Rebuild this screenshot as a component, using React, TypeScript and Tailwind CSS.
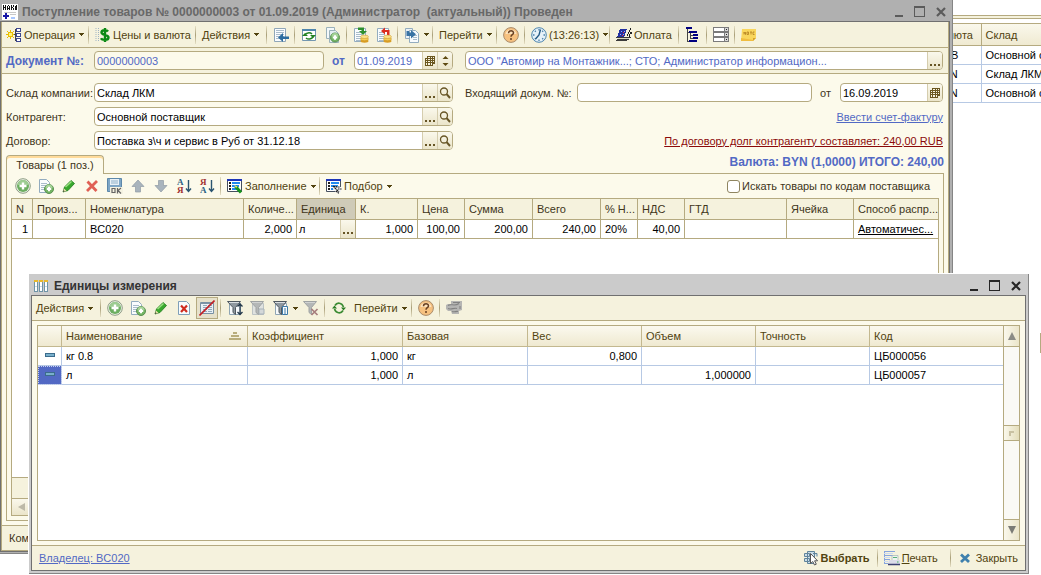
import React from "react";

type Kids = { children?: React.ReactNode };

/* ---------- icons ---------- */

function Svg({ children, crisp = false, w = 16, h = 16 }: Kids & { crisp?: boolean; w?: number; h?: number }) {
  return (
    <svg width={w} height={h} viewBox={`0 0 ${w} ${h}`} className="shrink-0" shapeRendering={crisp ? "crispEdges" : "auto"} aria-hidden="true" fill="none">
      {children}
    </svg>
  );
}

const InvoiceIcon = () => (
  <Svg crisp w={16} h={16}>
    <path d="M0 0h16v16H0z" fill="#fff" />
    <path d="M1 1h1v5H1zM3 1h1v5H3zM2 3h1v1H2zM5 2h1v4H5zM6 1h1v1H6zM7 2h1v4H7zM6 4h1v1H6zM9 1h1v5H9zM10 3h1v1h-1zM11 1h1v2h-1zM11 4h1v2h-1zM13 2h1v4h-1zM14 1h1v5h-1z" fill="#111" />
    <path d="M2 8h12v1H2zM8 10h6v1H8z" fill="#c9c9c9" />
    <path d="M1 11h6v2H1zM3 9h2v6H3z" fill="#1515a8" />
    <path d="M9 13h4v2H9z" fill="#a9c8ff" />
  </Svg>
);

const OperationIcon = () => (
  <Svg crisp>
    <path d="M1 4h1v1H1zM4 3h1v2H4zM7 4h1v1H7zM2 5h5v1H2zM0 7h8v1H0zM2 6h1v3H2zM5 6h2v3H5zM2 9h5v1H2zM4 10h1v2H4zM1 10h1v1H1zM7 10h1v1H7z" fill="#e9bd00" />
    <path d="M3 6h3v3H3z" fill="#fff27a" />
    <path d="M8 7h2v1H8zM9 2h1v12H9zM9 2h2v1H9zM9 13h2v1H9z" fill="#444" />
    <path d="M10 1h5v4h-5zM10 6h5v4h-5zM10 11h5v4h-5z" fill="#3c4790" />
    <path d="M11 2h3v2h-3zM11 7h3v2h-3zM11 12h3v2h-3z" fill="#fff" />
  </Svg>
);

const DollarIcon = () => (
  <Svg>
    <path d="M1 1v14M3.500 1v14" stroke="#9fb4c4" strokeDasharray="1 1" />
    <path d="M13 4.500C12 3 6.500 2.500 6.500 5.500c0 3 7 1.800 7 5 0 3.300-6.500 2.800-7.500.8M10 1v14" stroke="#0b8a14" strokeWidth="2.400" />
  </Svg>
);

const Lines = ({ x = 3, y = 4, n = 4, w = 8 }: { x?: number; y?: number; n?: number; w?: number }) => (
  <>
    {Array.from({ length: n }, (_, i) => (
      <path key={i} d={`M${x} ${y + i * 2 + 0.5}h${w}`} stroke="#a9bccb" />
    ))}
  </>
);

const RegisterIcon = () => (
  <Svg>
    <path d="M1.500 1.500h11v13h-11z" fill="#fafcfe" stroke="#8fa6b8" />
    <Lines x={3} y={3} n={5} w={8} />
    <path d="M16 9.500H10V6L5 10.500l5 4.500v-3h6z" fill="#2d6da0" />
  </Svg>
);

const RefreshPageIcon = () => (
  <Svg>
    <path d="M1.500 2.500h13v11h-13z" fill="#fff" stroke="#7397b0" />
    <path d="M1 2h14v2H1z" fill="#4f86ad" />
    <path d="M4 8a4 3 0 0 1 7-1M12 9a4 3 0 0 1-7 2" stroke="#238323" strokeWidth="1.500" />
    <path d="M9 8h6l-3 3zM7 9H1l3-3z" fill="#238323" />
  </Svg>
);

const PlusBall = ({ cx, cy, r }: { cx: number; cy: number; r: number }) => (
  <>
    <circle cx={cx} cy={cy} r={r} fill="#74b565" stroke="#5b9151" />
    <path d={`M${cx - r + 1} ${cy - 1}a${r - 1} ${r - 1} 0 0 1 ${2 * r - 2} 0z`} fill="#a5d398" />
    <path d={`M${cx - r / 2} ${cy}h${r}M${cx} ${cy - r / 2}v${r}`} stroke="#fff" strokeWidth="2" />
  </>
);

const CopyAddIcon = () => (
  <Svg>
    <path d="M1.500.5h8v11h-8z" fill="#f3f8fa" stroke="#9ab1ba" />
    <path d="M4.500 3.500h6l3 3v9h-9z" fill="#e4eef2" stroke="#9ab1ba" />
    <PlusBall cx={10} cy={10.500} r={4.500} />
  </Svg>
);

const DocAddIcon = () => (
  <Svg>
    <path d="M1.500 1.500h7l3 3v10h-10z" fill="#fafcfd" stroke="#93acbf" />
    <Lines x={3} y={5} n={4} w={6} />
    <PlusBall cx={11} cy={11} r={4.500} />
  </Svg>
);

const AddIcon = () => (
  <Svg>
    <circle cx="8" cy="8" r="7.300" fill="#f2f5ec" stroke="#8b9b83" />
    <circle cx="8" cy="8" r="6" fill="#6cae61" />
    <path d="M2.500 7a5.500 5 0 0 1 11 0z" fill="#9dcc92" />
    <path d="M4.500 8h7M8 4.500v7" stroke="#fff" strokeWidth="2.400" />
  </Svg>
);

const PostIcon = ({ red = false }: { red?: boolean }) => (
  <Svg>
    <path d="M1.500 1.500h11v13h-11z" fill="#fafcfe" stroke="#94adc0" />
    <Lines x={3} y={5} n={5} w={6} />
    {red ? (
      <path d="M13.500 8V3H9V.5L5 4l4 3.500V5h2v3" fill="#dc2e20" />
    ) : (
      <path d="M5 .5h6V4h3l-4 4-4-4h2.500V3H5z" fill="#2e8f2d" />
    )}
    <ellipse cx="11.500" cy="14" rx="4" ry="1.700" fill="#d99d24" />
    <ellipse cx="11.500" cy="12" rx="4" ry="1.700" fill="#f4cf58" stroke="#c98e20" strokeWidth=".5" />
    <ellipse cx="11.500" cy="9.800" rx="4" ry="1.700" fill="#fae28a" stroke="#c98e20" strokeWidth=".5" />
  </Svg>
);

const BasedOnIcon = () => (
  <Svg>
    <path d="M1.500 1.500h7v10h-7z" fill="#eaf1f6" stroke="#93acbf" />
    <path d="M5.500 3.500h6l3 3v9h-9z" fill="#f8fbfd" stroke="#93acbf" />
    <Lines x={9} y={8} n={3} w={4} />
    <path d="M2.500 4v5H7v2.500l5-4.300L7 3v2.500H5V4z" fill="#3873a4" />
  </Svg>
);

const HelpIcon = () => (
  <Svg>
    <circle cx="8" cy="8" r="7.400" fill="#f6c180" stroke="#a98c6c" />
    <path d="M2.500 7a5.700 5.700 0 0 1 11 0z" fill="#fde3bd" />
    <path d="M5.500 6.200C5.500 3 10.700 3.200 10.500 6 10.400 7.700 8 7.800 8 9.800M8 11v2" stroke="#684023" strokeWidth="1.500" />
  </Svg>
);

const ClockIcon = () => (
  <Svg>
    <circle cx="8" cy="8" r="7.300" fill="#e6f1f8" stroke="#4c84ae" />
    <path d="M8 2v1.500M8 12.500V14M2 8h1.500M12.500 8H14M3.800 3.800l1 1M11.200 11.200l1 1M3.800 12.200l1-1M11.200 4.800l1-1" stroke="#4a82ab" strokeWidth="1.300" />
    <path d="M9.500 2.500L8 8l-3.500 4" stroke="#245a84" strokeWidth="1.400" />
  </Svg>
);

const PaymentIcon = () => (
  <Svg crisp>
    <path d="M4 2h7l-3 8H1z" fill="#2230a0" />
    <path d="M5 4h1v1H5zM8 4h1v1H8zM4 7h1v1H4zM7 7h1v1H7z" fill="#9aabff" />
    <path d="M7 5h1v1H7zM6 8h1v1H6z" fill="#e33" />
    <path d="M0 10h15v1H0zM1 12h12v1H1zM0 13h11v1H0z" fill="#3b3b3b" />
    <path d="M2 11h11v1H2z" fill="#d7d7c4" />
    <path d="M14 1h1v2h-1zM13 3h1v2h-1zM12 5h1v2h-1zM11 7h1v2h-1zM14 5h2v2h-2zM13 7h1v3h-1z" fill="#202020" />
  </Svg>
);

const TreeIcon = () => (
  <Svg crisp>
    <path d="M1 0h6v2H1zM4 4h8v2H4zM8 7h5v2H8zM8 10h5v2H8zM4 13h8v2H4z" fill="#000080" />
    <path d="M2 2h1v13H2zM2 5h2v1H2zM5 6h1v6H5zM5 8h3v1H5zM5 11h3v1H5zM2 14h2v1H2z" fill="#444" />
  </Svg>
);

const FormIcon = () => (
  <Svg crisp>
    {[0, 5, 10].map((y) => (
      <g key={y}>
        <path d={`M0 ${y}h16v5H0z`} fill="#7b7b7b" />
        <path d={`M1 ${y + 1}h10v3H1z`} fill="#fff" />
        <path d={`M12 ${y + 1}h3v3h-3z`} fill="#d8d8d8" />
        <path d={`M13 ${y + 2}h1v1h-1z`} fill="#222" />
      </g>
    ))}
  </Svg>
);

const NoteIcon = () => (
  <Svg>
    <path d="M1 2h14v9l-3 3H0z" fill="#f9d65c" />
    <path d="M15 11h-3v3z" fill="#d6a22a" />
    <path d="M0 11l12 2v1H0z" fill="#f0bd40" />
    <path d="M3 7.500V5l1.500 2.500V5M6 5h1.500v2.500H6zM9 5h2M10 5v2.500M13.500 5H12v2.500h1.500" stroke="#b17f20" strokeWidth=".8" />
  </Svg>
);

const PencilIcon = () => (
  <Svg>
    <path d="M2 14l1.500-5L10 2.500l3.500 3L7 12.500z" fill="#39a82e" stroke="#1d7a1a" strokeWidth=".8" />
    <path d="M4.500 9L10.500 3.500" stroke="#9be082" strokeWidth="1.500" />
    <path d="M2 14l1-3.500 2.500 2.500z" fill="#f2e3b0" />
    <path d="M2 14l.5-1.700 1.200 1z" fill="#222" />
  </Svg>
);

const RedXIcon = () => (
  <Svg>
    <path d="M3.500 3.500l9 9.500M13 3l-10 10" stroke="#e06055" strokeWidth="2.800" />
  </Svg>
);

const SaveOkIcon = () => (
  <Svg>
    <path d="M.5.500h14v13H.5z" fill="#7ea6c6" stroke="#5d88aa" />
    <path d="M3 1h9v6H3z" fill="#e9f1f7" />
    <path d="M4 3h7M4 5h7" stroke="#8fb0c8" />
    <path d="M3 9h13v7H3z" fill="#f5f3e2" />
    <path d="M5 10.500h3v4H5zM10.500 10v5.500M14 10l-3 2.500 3 3" stroke="#666" strokeWidth="1.200" />
  </Svg>
);

const ArrowIcon = ({ down = false }: { down?: boolean }) => (
  <Svg>
    <path d={down ? "M5.500 2.500h5v5H14l-6 6.500-6-6.500h3.500z" : "M5.500 14v-5.500H2L8 2l6 6.500h-3.500V14z"} fill="#a9b4bd" stroke="#8f9ba5" strokeWidth=".7" />
  </Svg>
);

const SortIcon = ({ desc = false }: { desc?: boolean }) => (
  <svg width="16" height="16" viewBox="0 0 16 16" className="shrink-0" aria-hidden="true">
    <text x="1" y="7" fontSize="9" fontWeight="700" fontFamily="Liberation Serif, serif" fill={desc ? "#a03030" : "#2b6284"}>{desc ? "Я" : "А"}</text>
    <text x="1" y="15" fontSize="9" fontWeight="700" fontFamily="Liberation Serif, serif" fill={desc ? "#2b6284" : "#a03030"}>{desc ? "А" : "Я"}</text>
    <path d="M12.500 2v11M10 10.500l2.500 3 2.500-3" stroke="#2b5570" strokeWidth="1.400" fill="none" />
  </svg>
);

const FillIcon = ({ pick = false }: { pick?: boolean }) => (
  <Svg>
    <path d="M.5 1.500h14v12H.5z" fill="#fff" stroke="#46505f" />
    <path d="M0 1h15v2H0z" fill="#1d35b8" />
    <path d="M2 4h2v2H2zM2 7h2v2H2zM2 10h2v2H2z" fill="#222" />
    <path d="M5 4h8v2H5zM5 7h7v2H5zM5 10h5v2H5z" fill="#208af0" />
    {pick ? (
      <>
        <path d="M7 8l8 1v5l-3 1.500-5-4z" fill="#f3f3f3" />
        <path d="M7 8l2 2M8 8.500h3M9 10l2 2M10 9h4M11 12l2 2M12 11h4M10 13l3 2.500" stroke="#222" strokeWidth="1.100" strokeDasharray="1.500 .6" />
      </>
    ) : (
      <>
        <path d="M8.500 8.500l5.500 6" stroke="#16931e" strokeWidth="3.200" />
        <path d="M7 7l2 3 1.500-1.500z" fill="#f0e66a" />
      </>
    )}
  </Svg>
);

const UnitsIcon = () => (
  <Svg crisp w={14} h={14}>
    {[0, 5, 10].map((x) => (
      <g key={x}>
        <path d={`M${x} 1h4v12h-4z`} fill="#6f94a6" />
        <path d={`M${x + 1} 3h2v9h-2z`} fill="#fff" />
        <path d={`M${x} 1h4v2h-4z`} fill="#e9b92c" />
        <path d={`M${x + 1} 7h2v1h-2z`} fill="#c8d8df" />
      </g>
    ))}
  </Svg>
);

const DocDeleteIcon = () => (
  <Svg>
    <path d="M2.500 1.500h8l3 3v10h-11z" fill="#f8fbfd" stroke="#7f9fb8" />
    <path d="M5 5.500l6 6.500M11 5.500L5 12" stroke="#cf2b1f" strokeWidth="2.200" />
  </Svg>
);

const HideIcon = () => (
  <Svg>
    <path d="M1.500 2.500h13v11h-13z" fill="#e9f0f5" stroke="#7890a3" />
    <path d="M4 5.500h4M9 5.500h4M4 7.500h4M9 7.500h4M4 9.500h4M9 9.500h4M4 11.500h4M9 11.500h4" stroke="#91a9ba" />
    <path d="M1 3h14v1H1z" fill="#7c93a5" />
    <path d="M.5 15.500L15.500.5" stroke="#c32026" strokeWidth="1.600" />
  </Svg>
);

const FilterIcon = ({ kind }: { kind: "set" | "value" | "menu" | "off" }) => {
  const dim = kind === "value" || kind === "off";
  return (
    <Svg>
      {kind !== "off" && <path d="M2.500 3.500h11v11h-11z" fill={dim ? "#dfe2e0" : "#f7fafc"} stroke={dim ? "#bcc3c4" : "#8fa5b4"} />}
      <path d="M.5 1.500h13l-5 6v7l-2.500-2v-5z" fill={dim ? "#b4b7b7" : "#8f989f"} stroke={dim ? "#9fa3a3" : "#4f585f"} />
      <path d="M2 2.500h10" stroke={dim ? "#d0d2d2" : "#d9dee1"} />
      {kind === "set" && <path d="M13 4v10M10.500 6.500L13 4l2.500 2.500M10.500 12l2.500 2.500 2.500-2.500" stroke="#24384a" strokeWidth="1.300" />}
      {kind === "value" && <path d="M9 9h5v5H9z" fill="#d4d8d9" stroke="#a8b2b8" />}
      {kind === "menu" && <path d="M9.500 6.500h5v8h-5zM11 9h2M11 11h2M11 13h2" fill="#f7fbfe" stroke="#3d7aa7" />}
      {kind === "off" && <path d="M8.500 9l6 6M14.500 9l-6 6" stroke="#a67d7d" strokeWidth="1.700" />}
    </Svg>
  );
};

const RefreshIcon = () => (
  <Svg>
    <path d="M4 5.500C6 2 11 2.500 12.500 7M12 10.500C10 14 5 13.500 3.500 9" stroke="#3b8b33" strokeWidth="1.700" />
    <path d="M10 7.500h5l-2.500 3zM6 8.500H1l2.500-3z" fill="#2b7d24" />
  </Svg>
);

const StackIcon = () => (
  <Svg>
    <path d="M5 1h11v9l-3 1v3H6l-1-3H2L0 9V5l2-1h3z" fill="#b5b5b3" />
    <path d="M2 5.500C5 3 8 7 13 3.500M2 8.500c3 1.500 6-1 9 0M6 11.500c2 1 4-.5 6 0M7 2.500h7M14 6v3" stroke="#828282" strokeWidth="1.100" />
  </Svg>
);

const SelectIcon = () => (
  <Svg>
    <path d="M4.500 1.500h7v12h-7zM1.500 3.500h5v3h-5zM1.500 8.500h5v3h-5zM10 3.500h4v3" fill="#cbdde8" stroke="#60849b" />
    <path d="M7.500 3.500v10l2.300-2 1.700 3.500 1.800-.8-1.700-3.400h3z" fill="#fff" stroke="#555" />
  </Svg>
);

const PrintIcon = () => (
  <Svg>
    <path d="M0 1.500h11M0 5.500h9M0 9.500h6M0 13.500h5M.5 1v13" stroke="#86a4dd" />
    <path d="M0 3.500h9M0 7.500h6M0 11.500h4" stroke="#cbd9f2" />
    <path d="M8 5.500h6v5H8z" fill="#eef5ee" stroke="#a3b4b8" strokeWidth=".7" />
    <path d="M9 7.500h4" stroke="#59b07a" />
    <path d="M5 10h11v4H4z" fill="#dcdcea" />
    <path d="M4 14.500h12" stroke="#3b3f72" strokeWidth="1.500" />
    <path d="M13 12h1.500" stroke="#3ab55a" />
  </Svg>
);

const BlueXIcon = () => (
  <Svg w={12} h={12}>
    <path d="M2 2.500l8 7.500M10 2.500L2 10" stroke="#3f80ad" strokeWidth="2.800" />
  </Svg>
);

const CalendarIcon = () => (
  <Svg crisp w={10} h={10}>
    <path d="M2 0h8v8H2zM0 2h8v8H0z" fill="#6b5720" />
    <path d="M1 3h1v1H1zM3 3h2v1H3zM6 3h1v1H6zM1 5h1v1H1zM3 5h2v1H3zM6 5h1v1H6zM1 7h1v2H1zM3 7h2v2H3zM6 7h1v2H6zM3 1h2v1H3zM6 1h1v1H6zM8 1h1v1H8zM8 3h1v1H8zM8 5h1v1H8z" fill="#f8f4e2" />
  </Svg>
);

const SearchIcon = () => (
  <Svg w={12} h={12}>
    <circle cx="5" cy="4.500" r="3.500" stroke="#675525" strokeWidth="1.300" />
    <path d="M7.500 7l3.500 4" stroke="#675525" strokeWidth="1.900" />
  </Svg>
);

const SpinIcon = () => (
  <Svg w={7} h={12}>
    <path d="M3.500 1L6.500 4h-6zM3.500 11L.5 8h6z" fill="#5e4a12" />
  </Svg>
);

const Dots = () => (
  <Svg crisp w={10} h={10}>
    <path d="M0 8h2v2H0zM4 8h2v2H4zM8 8h2v2H8z" fill="#675525" />
  </Svg>
);

const Caret = () => (
  <Svg crisp w={5} h={3}>
    <path d="M0 0h5v1H0zM1 1h3v1H1zM2 2h1v1H2z" fill="#51430f" />
  </Svg>
);

const RowMark = () => (
  <Svg crisp w={10} h={4}>
    <path d="M0 0h10v4H0z" fill="#3c6c8c" />
    <path d="M1 1h8v2H1z" fill="#79b0cc" />
  </Svg>
);

/* ---------- shared controls ---------- */

function Tool({ icon, label, menu = false, className = "", name }: { icon?: React.ReactNode; label?: string; menu?: boolean; className?: string; name?: string }) {
  return (
    <button type="button" aria-label={label ? undefined : name} className={`flex h-5 shrink-0 items-center gap-[2px] whitespace-nowrap text-[#51430f] ${className}`}>
      {icon}
      {label && <span>{label}</span>}
      {menu && <span className="ml-[2px]"><Caret /></span>}
    </button>
  );
}

const Sep = () => <span className="mr-[6px] ml-[5px] h-[18px] w-px shrink-0 bg-gradient-to-b from-[#e6e0c6] via-[#a99f78] to-[#e6e0c6]" />;

function MiniButton({ children, name }: Kids & { name: string }) {
  return (
    <button type="button" aria-label={name} className="flex w-[15px] shrink-0 items-center justify-center border-l border-[#d5cdae] bg-gradient-to-b from-[#faf8ec] to-[#ebe5ca]">
      {children}
    </button>
  );
}

function Field({ id, value, className = "", input = "text-black", name, children }: Kids & { id: string; value: string; className?: string; input?: string; name?: string }) {
  return (
    <div className={`flex h-[19px] min-w-0 overflow-hidden rounded-[4px] border border-[#b5aa80] ${className}`}>
      <input id={id} aria-label={name} defaultValue={value} className={`min-w-0 flex-1 px-[2px] outline-none ${input}`} />
      {children}
    </div>
  );
}

function WindowButtons({ color }: { color: string }) {
  return (
    <div className={`ml-auto flex items-center gap-[9px] ${color}`}>
      <button type="button" aria-label="Свернуть">
        <Svg crisp w={12} h={12}><path d="M2 9h8v2H2z" fill="currentColor" /></Svg>
      </button>
      <button type="button" aria-label="Развернуть">
        <Svg crisp w={12} h={12}><path d="M0 0h11v11H0zM1 2v8h9V2z" fillRule="evenodd" fill="currentColor" /></Svg>
      </button>
      <button type="button" aria-label="Закрыть окно">
        <Svg w={12} h={12}><path d="M2 2l8 8M10 2l-8 8" stroke="currentColor" strokeWidth="2.200" /></Svg>
      </button>
    </div>
  );
}

/* ---------- background list ---------- */

function BackgroundList() {
  const rows = [["RUB", "Основной склад"], ["BYN", "Склад ЛКМ"], ["BYN", "Основной склад"]];
  return (
    <div className="ml-auto w-[111px] overflow-hidden pt-[15px]">
      <div className="mb-[4px] h-[4px] border-y border-[#b5aa80] bg-[#f5f2dd]" />
      <table className="w-[160px] table-fixed border-collapse border-t border-[#b5aa80]">
        <colgroup><col className="w-[51px]" /><col /></colgroup>
        <thead>
          <tr className="h-[22px] bg-gradient-to-b from-[#faf8ec] to-[#efe9d0] text-left text-[#51430f]">
            <th className="border-r border-b border-[#b5aa80] px-[4px] font-normal">Валюта</th>
            <th className="border-b border-[#b5aa80] px-[4px] font-normal whitespace-nowrap">Склад</th>
          </tr>
        </thead>
        <tbody className="text-black">
          {rows.map((r, i) => (
            <tr key={i} className="h-[19px]">
              <td className="border-r border-b border-[#b7c9e4] px-[5px]">{r[0]}</td>
              <td className="border-b border-[#b7c9e4] px-[4px] whitespace-nowrap">{r[1]}</td>
            </tr>
          ))}
        </tbody>
      </table>
      <div className="mt-[230px] ml-auto h-5 w-px bg-[#b5aa80]" />
    </div>
  );
}

/* ---------- receipt window ---------- */

const goods = [
  { title: "N", w: "w-[21px]", value: "1", right: true },
  { title: "Произ...", w: "w-[53px]", value: "" },
  { title: "Номенклатура", w: "", value: "BC020" },
  { title: "Количе...", w: "w-[53px]", value: "2,000", right: true },
  { title: "Единица", w: "w-[59px]", value: "л", active: true },
  { title: "К.", w: "w-[62px]", value: "1,000", right: true },
  { title: "Цена", w: "w-[47px]", value: "100,00", right: true },
  { title: "Сумма", w: "w-[68px]", value: "200,00", right: true },
  { title: "Всего", w: "w-[68px]", value: "240,00", right: true },
  { title: "% Н...", w: "w-[37px]", value: "20%" },
  { title: "НДС", w: "w-[47px]", value: "40,00", right: true },
  { title: "ГТД", w: "w-[102px]", value: "" },
  { title: "Ячейка", w: "w-[67px]", value: "" },
  { title: "Способ распр...", w: "w-[84px]", value: "Автоматичес...", link: true },
];

function LookupRow({ id, label, value }: { id: string; label: string; value: string }) {
  return (
    <div className="flex items-center">
      <label htmlFor={id} className="w-[88px] shrink-0 whitespace-nowrap">{label}</label>
      <Field id={id} value={value} className="flex-1 bg-white">
        <MiniButton name="Выбрать из списка"><Dots /></MiniButton>
        <MiniButton name="Открыть"><SearchIcon /></MiniButton>
      </Field>
    </div>
  );
}

function ReceiptWindow() {
  return (
    <section className="absolute top-0 right-[88px] bottom-[21px] left-0 flex flex-col border-r border-b border-[#858585] bg-[#b0b0b0] pr-[2px] pb-px">
      <header className="flex h-[21px] shrink-0 items-center pt-[2px] pr-[3px] pl-[2px]">
        <InvoiceIcon />
        <h1 className="ml-[4px] text-[12px] font-bold whitespace-pre text-[#686868]">Поступление товаров № 0000000003 от 01.09.2019 (Администратор  (актуальный)) Проведен</h1>
        <WindowButtons color="text-[#5b5b5b]" />
      </header>
      <div className="flex min-h-0 flex-1 flex-col border border-[#707070] bg-[#fcfaeb]">
        <div className="flex min-h-0 flex-1 flex-col border-x border-b border-[#b5aa80]">
          <div className="flex h-[26px] shrink-0 items-center border-b border-[#b5aa80] bg-[#f5f2dd] pl-[4px]">
            <Tool icon={<OperationIcon />} label="Операция" menu className="w-[77px]" />
            <Sep />
            <Tool icon={<DollarIcon />} label="Цены и валюта" className="w-[95px]" />
            <Sep />
            <Tool label="Действия" menu className="w-[59px]" />
            <Sep />
            <Tool icon={<RegisterIcon />} name="Движения документа" />
            <Sep />
            <div className="flex gap-[8px]">
              <Tool icon={<RefreshPageIcon />} name="Обновить" />
              <Tool icon={<CopyAddIcon />} name="Скопировать" />
            </div>
            <Sep />
            <div className="flex gap-[7px]">
              <Tool icon={<PostIcon />} name="Провести" />
              <Tool icon={<PostIcon red />} name="Отмена проведения" />
            </div>
            <Sep />
            <Tool icon={<BasedOnIcon />} menu name="Ввести на основании" />
            <span className="-ml-[2px] flex"><Sep /></span>
            <Tool label="Перейти" menu className="w-[52px]" />
            <Sep />
            <Tool icon={<HelpIcon />} name="Справка" />
            <Sep />
            <Tool icon={<ClockIcon />} label="(13:26:13)" menu className="w-[73px]" />
            <Sep />
            <Tool icon={<PaymentIcon />} label="Оплата" className="w-[57px]" />
            <Sep />
            <Tool icon={<TreeIcon />} name="Структура подчиненности" />
            <Sep />
            <Tool icon={<FormIcon />} name="Реквизиты" />
            <Sep />
            <Tool icon={<NoteIcon />} name="Заметка" />
          </div>

          <div className="flex h-[26px] shrink-0 items-center border-b border-[#b5aa80] bg-[#f5f2dd] pr-[5px] pl-[4px] text-[#5269c4]">
            <label htmlFor="doc-number" className="w-[88px] shrink-0 text-[12px] font-bold">Документ №:</label>
            <Field id="doc-number" value="0000000003" className="w-[230px] bg-[#fcfaeb]" input="text-[#5269c4]" />
            <label htmlFor="doc-date" className="w-[30px] shrink-0 pl-[8px] text-[12px] font-bold">от</label>
            <Field id="doc-date" value="01.09.2019" className="w-[99px] shrink-0 bg-white" input="text-[#5269c4]">
              <MiniButton name="Календарь"><CalendarIcon /></MiniButton>
              <MiniButton name="Изменить дату"><SpinIcon /></MiniButton>
            </Field>
            <Field id="doc-info" name="Реквизиты документа" value={'ООО "Автомир на Монтажник...; СТО; Администратор информацион...'} className="ml-[12px] flex-1 bg-white" input="text-[#5269c4]">
              <MiniButton name="Выбрать реквизиты"><Dots /></MiniButton>
            </Field>
          </div>

          <div className="flex shrink-0 gap-[12px] pt-[9px] pr-[5px] pl-[4px]">
            <div className="flex w-[447px] shrink-0 flex-col gap-[5px]">
              <LookupRow id="store" label="Склад компании:" value="Склад ЛКМ" />
              <LookupRow id="partner" label="Контрагент:" value="Основной поставщик" />
              <LookupRow id="contract" label="Договор:" value="Поставка з\ч и сервис в Руб от 31.12.18" />
            </div>
            <div className="flex min-w-0 flex-1 flex-col gap-[5px]">
              <div className="flex items-center">
                <label htmlFor="in-number" className="w-[112px] shrink-0 whitespace-nowrap">Входящий докум. №:</label>
                <Field id="in-number" value="" className="flex-1 bg-white" />
                <label htmlFor="in-date" className="w-[28px] shrink-0 pl-[8px]">от</label>
                <Field id="in-date" value="16.09.2019" className="w-[103px] shrink-0 bg-white">
                  <MiniButton name="Календарь"><CalendarIcon /></MiniButton>
                </Field>
              </div>
              <div className="flex h-[19px] items-center justify-end"><a href="#invoice" className="text-[#5269c4] underline">Ввести счет-фактуру</a></div>
              <div className="flex h-[19px] items-center justify-end"><a href="#debt" className="whitespace-nowrap text-[#8b0a0a] underline">По договору долг контрагенту составляет: 240,00 RUB</a></div>
            </div>
          </div>

          <div className="flex h-[23px] shrink-0 items-end justify-between pr-[4px] pl-[4px]">
            <button type="button" className="relative z-10 -mb-px h-[19px] w-[98px] rounded-t-[4px] border border-b-0 border-[#b5aa80] bg-[#fcfaeb] shadow-[inset_0_2px_0_#ffdb9a]">Товары (1 поз.)</button>
            <p className="pb-[4px] text-[12px] font-bold text-[#5269c4]">Валюта: BYN (1,0000) ИТОГО: 240,00</p>
          </div>

          <div className="mx-[4px] mb-[4px] flex min-h-0 flex-1 flex-col border border-[#b5aa80] px-[4px] pb-[4px]">
            <div className="flex h-[24px] shrink-0 items-center pl-[4px]">
              <div className="flex gap-[7px]">
                <Tool icon={<AddIcon />} name="Добавить" />
                <Tool icon={<DocAddIcon />} name="Скопировать строку" />
                <Tool icon={<PencilIcon />} name="Изменить" />
                <Tool icon={<RedXIcon />} name="Удалить" />
                <Tool icon={<SaveOkIcon />} name="Завершить" />
                <Tool icon={<ArrowIcon />} name="Вверх" />
                <Tool icon={<ArrowIcon down />} name="Вниз" />
                <Tool icon={<SortIcon />} name="По возрастанию" />
                <Tool icon={<SortIcon desc />} name="По убыванию" />
              </div>
              <Sep />
              <Tool icon={<FillIcon />} label="Заполнение" menu className="w-[87px]" />
              <Sep />
              <Tool icon={<FillIcon pick />} label="Подбор" menu />
              <label className="ml-auto flex items-center gap-[2px] pr-[9px] whitespace-nowrap">
                <input type="checkbox" className="h-[13px] w-[13px] appearance-none rounded-[3px] border border-[#8f8560] bg-white" />
                Искать товары по кодам поставщика
              </label>
            </div>
            <div className="flex min-h-0 flex-1 flex-col border border-[#b5aa80] bg-white">
              <table className="w-full table-fixed border-separate border-spacing-0">
                <colgroup>{goods.map((c) => <col key={c.title} className={c.w} />)}</colgroup>
                <thead>
                  <tr className="h-[21px] text-left">
                    {goods.map((c) => (
                      <th key={c.title} className={`overflow-hidden border-r border-b border-[#b5aa80] pl-[4px] font-normal whitespace-nowrap last:border-r-0 ${c.active ? "bg-[#cfcbb8]" : "bg-[#f5f2dd]"}`}>{c.title}</th>
                    ))}
                  </tr>
                </thead>
                <tbody>
                  <tr className="h-[19px] text-black">
                    {goods.map((c) => (
                      <td key={c.title} className={`overflow-hidden border-r border-b border-[#b5aa80] whitespace-nowrap last:border-r-0 ${c.right ? "pr-[4px] text-right" : c.active ? "pl-[2px]" : "pl-[4px]"}`}>
                        {c.active ? (
                          <div className="flex h-[18px] items-center justify-between">
                            {c.value}
                            <span className="flex h-[18px]"><MiniButton name="Выбрать единицу"><Dots /></MiniButton></span>
                          </div>
                        ) : c.link ? <span className="underline">{c.value}</span> : c.value}
                      </td>
                    ))}
                  </tr>
                </tbody>
              </table>
              <div className="mt-auto h-[21px] border-t border-[#b5aa80] bg-[#f5f2dd]" />
              <div className="flex h-[17px] shrink-0 items-center border-t border-[#b5aa80] bg-gradient-to-b from-[#faf8ec] to-[#ebe5ca] pl-[6px]">
                <Svg w={8} h={8}><path d="M7 0v8L0 4z" fill="#bdb9a8" /></Svg>
              </div>
            </div>
          </div>
          <footer className="flex h-[25px] shrink-0 items-center border-t border-[#b5aa80] bg-[#f5f2dd] pl-[7px]">
            <label htmlFor="comment">Комментарий:</label>
            <Field id="comment" value="" className="mx-2 flex-1 bg-white" />
          </footer>
        </div>
      </div>
    </section>
  );
}

/* ---------- units dialog ---------- */

const unitColumns = [
  { title: "Наименование", w: "w-[186px]" },
  { title: "Коэффициент", w: "w-[155px]" },
  { title: "Базовая", w: "w-[125px]" },
  { title: "Вес", w: "w-[114px]" },
  { title: "Объем", w: "w-[114px]" },
  { title: "Точность", w: "w-[114px]" },
  { title: "Код", w: "" },
];

const units = [
  ["кг 0.8", "1,000", "кг", "0,800", "", "", "ЦБ000056"],
  ["л", "1,000", "л", "", "1,000000", "", "ЦБ000057"],
];

function UnitsDialog() {
  return (
    <section className="absolute top-[274px] right-[12px] bottom-px left-[29px] flex flex-col border-r border-b border-[#858585] bg-[#cbcbcb] pr-[2px] pb-[2px] pl-[2px] shadow-[-1px_-1px_0_#ffffff]">
      <header className="flex h-[21px] shrink-0 items-center pt-[2px] pr-[4px] pl-[3px]">
        <UnitsIcon />
        <h2 className="ml-[6px] text-[12px] font-bold text-[#333]">Единицы измерения</h2>
        <WindowButtons color="text-[#262626]" />
      </header>
      <div className="flex min-h-0 flex-1 flex-col border border-[#707070] bg-[#fcfaeb]">
        <div className="flex h-[25px] shrink-0 items-center border-b border-[#b5aa80] bg-[#f5f2dd] pl-[4px]">
          <Tool label="Действия" menu className="w-[59px]" />
          <Sep />
          <div className="flex items-center gap-[7px]">
            <Tool icon={<AddIcon />} name="Добавить" />
            <Tool icon={<DocAddIcon />} name="Скопировать" />
            <Tool icon={<PencilIcon />} name="Изменить" />
            <Tool icon={<DocDeleteIcon />} name="Пометить на удаление" />
            <button type="button" aria-label="Показать помеченные" className="-mx-[3px] flex h-[22px] w-[22px] items-center justify-center border border-[#b5aa80] bg-[#e6e1cb]"><HideIcon /></button>
          </div>
          <Sep />
          <div className="flex items-center gap-[7px]">
            <Tool icon={<FilterIcon kind="set" />} name="Отбор и сортировка" />
            <Tool icon={<FilterIcon kind="value" />} name="Отбор по значению" />
            <Tool icon={<FilterIcon kind="menu" />} menu name="История отборов" className="w-[23px]" />
            <Tool icon={<FilterIcon kind="off" />} name="Отключить отбор" />
          </div>
          <Sep />
          <Tool icon={<RefreshIcon />} name="Обновить" />
          <Tool label="Перейти" menu className="ml-[7px] w-[52px]" />
          <Sep />
          <Tool icon={<HelpIcon />} name="Справка" />
          <Sep />
          <Tool icon={<StackIcon />} name="Дополнительно" />
        </div>

        <div className="mx-[5px] my-[4px] flex min-h-0 flex-1 border border-[#b5aa80] bg-white">
          <div className="min-w-0 flex-1">
            <table className="w-full table-fixed border-separate border-spacing-0">
              <colgroup>
                <col className="w-[24px]" />
                {unitColumns.map((c) => <col key={c.title} className={c.w} />)}
              </colgroup>
              <thead>
                <tr className="h-[21px] text-left text-[#51430f]">
                  <th aria-label="Состояние" className="border-r border-b border-[#c3b88f] bg-gradient-to-b from-[#fbf9ef] to-[#efe9d0]" />
                  {unitColumns.map((c, i) => (
                    <th key={c.title} className="border-r border-b border-[#c3b88f] bg-gradient-to-b from-[#fbf9ef] to-[#efe9d0] px-[4px] font-normal last:border-r-0">
                      <div className="flex items-center justify-between pr-[2px]">
                        {c.title}
                        {i === 0 && <Svg crisp w={12} h={8}><path d="M4 0h4v2H4zM2 3h8v2H2zM0 6h12v2H0z" fill="#b9ad7c" /></Svg>}
                      </div>
                    </th>
                  ))}
                </tr>
              </thead>
              <tbody>
                {units.map((row, r) => (
                  <tr key={r} className="h-[19px] text-black">
                    <td className={`border-r border-b border-[#b7c9e4] ${r === 1 ? "bg-[#5269c4] outline-1 -outline-offset-1 outline-dotted outline-[#c8d0f0]" : ""}`}>
                      <span className="flex justify-center pb-[2px]"><RowMark /></span>
                    </td>
                    {row.map((v, i) => (
                      <td key={i} className={`border-r border-b border-[#b7c9e4] whitespace-nowrap last:border-r-0 ${i === 1 || i === 3 || i === 4 ? "pr-[4px] text-right" : "pl-[4px]"}`}>{v}</td>
                    ))}
                  </tr>
                ))}
              </tbody>
            </table>
          </div>
          <div className="flex w-[16px] shrink-0 flex-col border-l border-[#b5aa80] bg-[#faf9f5]">
            <button type="button" aria-label="Прокрутить вверх" className="flex h-[21px] items-center justify-center border-b border-[#b5aa80] bg-gradient-to-r from-[#faf8ec] to-[#ebe5ca]">
              <Svg w={8} h={8}><path d="M4 0l4 8H0z" fill="#8b8b85" /></Svg>
            </button>
            <div className="flex min-h-0 flex-1 flex-col">
              <div className="flex-1" />
              <div className="flex h-[16px] shrink-0 items-center justify-center border-y border-[#b5aa80] bg-gradient-to-r from-[#faf8ec] to-[#e4ddba]">
                <Svg crisp w={5} h={5}><path d="M0 0h5v2H2v3H0z" fill="#c9c1a2" /></Svg>
              </div>
              <div className="flex-1" />
            </div>
            <button type="button" aria-label="Прокрутить вниз" className="flex h-[21px] items-center justify-center border-t border-[#b5aa80] bg-gradient-to-r from-[#faf8ec] to-[#ebe5ca]">
              <Svg w={8} h={8}><path d="M4 8L0 0h8z" fill="#7b7b75" /></Svg>
            </button>
          </div>
        </div>

        <footer className="flex h-[25px] shrink-0 items-center border-t border-[#b5aa80] bg-[#f5f2dd] pr-[7px] pl-[7px]">
          <a href="#owner" className="text-[#5269c4] underline">Владелец: BC020</a>
          <div className="ml-auto flex items-center text-[#51430f]">
            <button type="button" className="mr-[2px] flex items-center gap-[2px] font-bold"><SelectIcon />Выбрать</button>
            <Sep />
            <button type="button" className="flex w-[61px] items-center gap-[2px]"><PrintIcon /><span><u>П</u>ечать</span></button>
            <Sep />
            <button type="button" className="flex items-center gap-[5px] pl-[2px]"><BlueXIcon />Закрыть</button>
          </div>
        </footer>
      </div>
    </section>
  );
}

export default function App() {
  return (
    <main className="relative h-screen min-h-[500px] overflow-hidden bg-white font-['Liberation_Sans',Arial,sans-serif] text-[11px] leading-[14px] text-[#40351a]">
      <BackgroundList />
      <ReceiptWindow />
      <UnitsDialog />
    </main>
  );
}
